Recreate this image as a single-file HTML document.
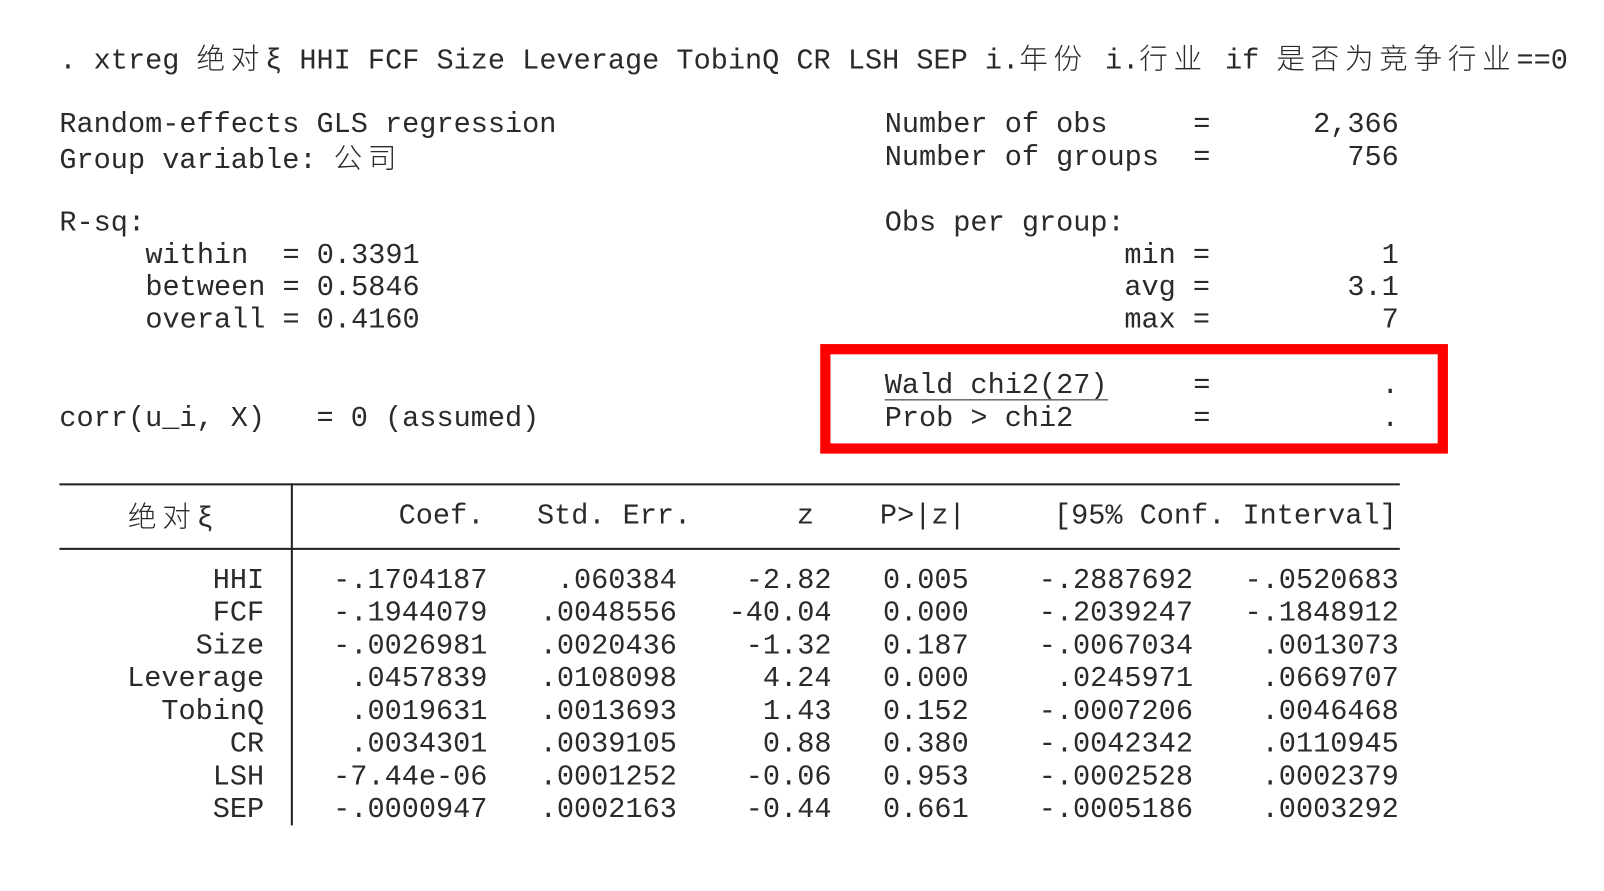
<!DOCTYPE html>
<html><head><meta charset="utf-8"><style>
html,body{margin:0;padding:0;background:#fff;width:1604px;height:870px;overflow:hidden}
#c{position:absolute;left:0;top:0;width:1604px;height:870px;transform:scale(1.024);transform-origin:0 0}
.t{position:absolute;white-space:pre;font-family:"Liberation Mono","Noto Sans CJK SC",monospace;font-size:27.9px;line-height:32px;height:32px;color:#2a2a2a}
.r{text-align:right}
.cj{font-family:"Noto Sans CJK SC",sans-serif;letter-spacing:5.6px;font-size:27.9px;font-weight:300}
.hl{position:absolute;background:#222;height:1.5px}
.vl{position:absolute;background:#222;width:1.5px}
</style></head><body><div id="c">
<div class="t" style="left:58px;top:40px">. xtreg <span class="cj">绝对</span>ξ HHI FCF Size Leverage TobinQ CR LSH SEP i.<span class="cj">年份</span> i.<span class="cj">行业</span> if <span class="cj">是否为竞争行业</span>==0</div>

<div class="t" style="left:58px;top:107px">Random-effects GLS regression</div>
<div class="t" style="left:58px;top:137px">Group variable: <span class="cj">公司</span></div>
<div class="t" style="left:58px;top:203px">R-sq:</div>
<div class="t" style="left:142px;top:235px">within  = 0.3391</div>
<div class="t" style="left:142px;top:266px">between = 0.5846</div>
<div class="t" style="left:142px;top:298px">overall = 0.4160</div>
<div class="t" style="left:58px;top:394px">corr(u_i, X)   = 0 (assumed)</div>

<div class="t" style="left:864px;top:107px">Number of obs     =</div>
<div class="t r" style="right:238px;top:107px">2,366</div>
<div class="t" style="left:864px;top:139px">Number of groups  =</div>
<div class="t r" style="right:238px;top:139px">756</div>
<div class="t" style="left:864px;top:203px">Obs per group:</div>
<div class="t" style="left:1098px;top:235px">min =</div>
<div class="t r" style="right:238px;top:235px">1</div>
<div class="t" style="left:1098px;top:266px">avg =</div>
<div class="t r" style="right:238px;top:266px">3.1</div>
<div class="t" style="left:1098px;top:298px">max =</div>
<div class="t r" style="right:238px;top:298px">7</div>

<div style="position:absolute;left:801px;top:336px;width:593px;height:87px;border:10px solid #f00"></div>
<div class="t" style="left:864px;top:362px">Wald chi2(27)     =</div>
<div class="hl" style="left:864px;top:390px;width:218px;height:1.2px"></div>
<div class="t r" style="right:238px;top:362px">.</div>
<div class="t" style="left:864px;top:394px">Prob > chi2       =</div>
<div class="t r" style="right:238px;top:394px">.</div>

<div class="hl" style="left:58px;top:472px;width:1309px"></div>
<div class="hl" style="left:58px;top:535px;width:1309px"></div>
<div class="vl" style="left:284px;top:472px;height:334px"></div>
<div class="t" style="left:125px;top:487px"><span class="cj">绝对</span>ξ</div>
<div class="t r" style="right:1131px;top:489px">Coef.</div>
<div class="t r" style="right:929px;top:489px">Std. Err.</div>
<div class="t r" style="right:809px;top:489px">z</div>
<div class="t r" style="right:661px;top:489px">P>|z|</div>
<div class="t r" style="right:240px;top:489px">[95% Conf. Interval]</div>

<div class="t r" style="right:1346px;top:552px;line-height:32px">HHI
FCF
Size
Leverage
TobinQ
CR
LSH
SEP</div>
<div class="t r" style="right:1128px;top:552px;height:260px">-.1704187
-.1944079
-.0026981
 .0457839
 .0019631
 .0034301
-7.44e-06
-.0000947</div>
<div class="t r" style="right:943px;top:552px;height:260px">.060384
.0048556
.0020436
.0108098
.0013693
.0039105
.0001252
.0002163</div>
<div class="t r" style="right:792px;top:552px;height:260px">-2.82
-40.04
-1.32
4.24
1.43
0.88
-0.06
-0.44</div>
<div class="t r" style="right:658px;top:552px;height:260px">0.005
0.000
0.187
0.000
0.152
0.380
0.953
0.661</div>
<div class="t r" style="right:439px;top:552px;height:260px">-.2887692
-.2039247
-.0067034
 .0245971
-.0007206
-.0042342
-.0002528
-.0005186</div>
<div class="t r" style="right:238px;top:552px;height:260px">-.0520683
-.1848912
 .0013073
 .0669707
 .0046468
 .0110945
 .0002379
 .0003292</div>
</div></body></html>
